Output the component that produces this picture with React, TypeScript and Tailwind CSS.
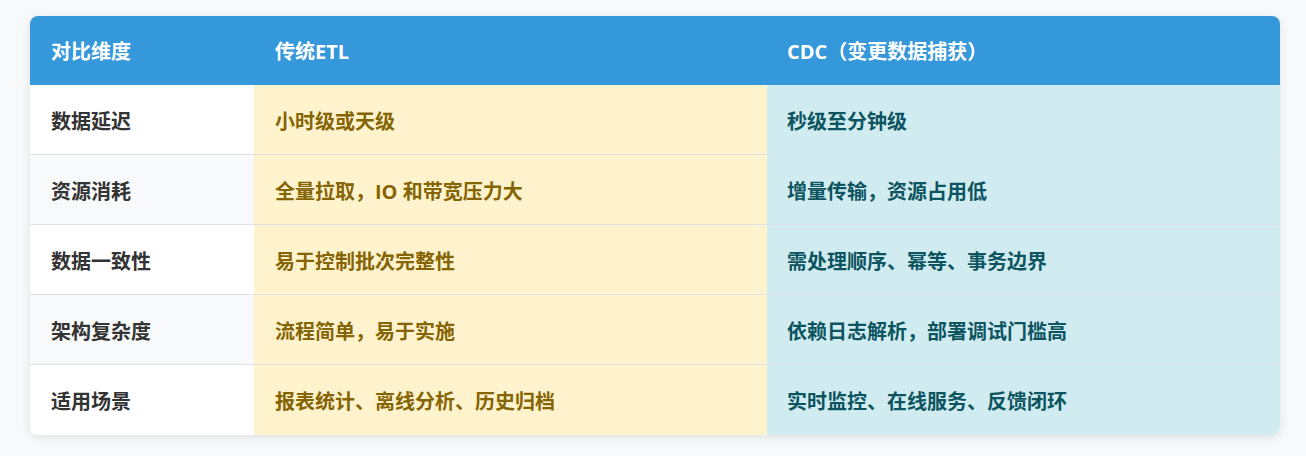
import React from "react";

const rows = [
  ["数据延迟", "小时级或天级", "秒级至分钟级"],
  ["资源消耗", "全量拉取，IO 和带宽压力大", "增量传输，资源占用低"],
  ["数据一致性", "易于控制批次完整性", "需处理顺序、幂等、事务边界"],
  ["架构复杂度", "流程简单，易于实施", "依赖日志解析，部署调试门槛高"],
  ["适用场景", "报表统计、离线分析、历史归档", "实时监控、在线服务、反馈闭环"],
];

export default function App() {
  return (
    <div
      className="min-h-[456px] w-full bg-[#f8f9fa] pt-4 px-[30px]"
      style={{ fontFamily: '"Open Sans", "Noto Sans CJK SC", sans-serif' }}
    >
      <div className="w-[1250px] overflow-hidden rounded-[8px] bg-white shadow-[0_2px_10px_rgba(0,0,0,0.1)]">
        <div className="grid grid-cols-[224px_513px_513px] bg-[#3498db] text-white font-bold text-[20px] leading-[23px]">
          <div className="px-[21px] pt-[24px] pb-[22px]">对比维度</div>
          <div className="px-[21px] pt-[24px] pb-[22px]">传统ETL</div>
          <div className="px-[20px] pt-[24px] pb-[22px]">CDC（变更数据捕获）</div>
        </div>
        {rows.map((r, i) => (
          <div
            key={i}
            className={
              "grid grid-cols-[224px_513px_513px] text-[20px] leading-[23px] font-bold " +
              (i < rows.length - 1 ? "border-b border-[#dee2e6]" : "") +
              (i % 2 === 1 ? " bg-[#f8f9fa]" : " bg-white")
            }
          >
            <div className={"px-[21px] pt-[25px] text-[#333333] " + (i === rows.length - 1 ? "pb-[22px]" : "pb-[21px]")}>{r[0]}</div>
            <div className={"px-[21px] pt-[25px] bg-[#fff3cd] text-[#856404] " + (i === rows.length - 1 ? "pb-[22px]" : "pb-[21px]")}>{r[1]}</div>
            <div className={"px-[20px] pt-[25px] bg-[#d1ecf1] text-[#0c5460] " + (i === rows.length - 1 ? "pb-[22px]" : "pb-[21px]")}>{r[2]}</div>
          </div>
        ))}
      </div>
    </div>
  );
}
